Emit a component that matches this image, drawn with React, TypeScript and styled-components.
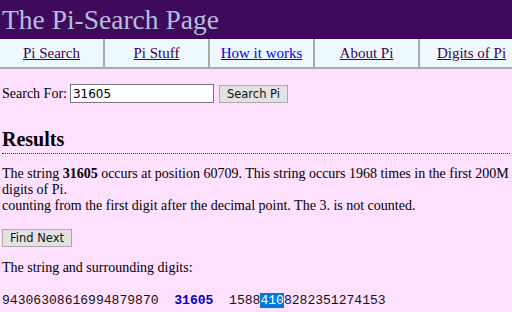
import React from "react";
import styled, { createGlobalStyle } from "styled-components";

const Global = createGlobalStyle`
  html, body { margin: 0; padding: 0; background: #ffe0ff; overflow: hidden; }
  body { font-family: "Liberation Serif", "Times New Roman", serif; font-size: 14px; color: #000; }
`;

const Header = styled.header`
  background: #400a5c;
  height: 39px;
  display: flex;
  align-items: center;
  padding: 0 2px;
`;

const Title = styled.h1`
  margin: 0;
  font-family: "Liberation Serif", serif;
  font-weight: normal;
  font-size: 27.5px;
  color: #b4bedc;
`;

const Nav = styled.nav`
  display: flex;
  width: 530px;
  background: #eef8ff;
  border-bottom: 2px solid #aaaaaa;
`;

const NavCell = styled.div`
  flex: 0 0 105px;
  height: 28px;
  box-sizing: border-box;
  border-right: 2px solid #aaaaaa;
  display: flex;
  align-items: center;
  justify-content: center;
  font-size: 15px;
`;

const NavLink = styled.a<{ $visited?: boolean }>`
  color: ${(p) => (p.$visited ? "#400050" : "#0000ee")};
  text-decoration: underline;
`;

const Content = styled.main`
  padding: 0 2px;
`;

const SearchRow = styled.form`
  display: flex;
  align-items: center;
  margin-top: 15px;
  gap: 4px;
`;

const Label = styled.label`
  font-size: 14px;
  margin-right: -1px;
`;

const Input = styled.input`
  width: 144px;
  height: 19px;
  box-sizing: border-box;
  border: 1px solid #777;
  background: #fff;
  font-family: "DejaVu Sans", sans-serif;
  font-size: 12px;
  padding: 0 2px;
  margin: 0 1px 0 0;
`;

const Button = styled.button`
  font-family: "DejaVu Sans", Verdana, sans-serif;
  font-size: 11.5px;
  height: 18px;
  padding: 0 7px;
  background: #e2e2e2;
  border: 1px solid #aaaaaa;
  color: #111;
  margin: 0;
`;

const H2 = styled.h2`
  margin: 25px 0 0;
  font-size: 20px;
  font-weight: bold;
  padding-bottom: 2px;
  border-bottom: 1px dotted #cc0000;
`;

const Para = styled.p`
  margin: 12px 0 0;
  font-size: 14px;
  line-height: 16px;
`;

const FindRow = styled.div`
  margin-top: 15px;
`;

const Note = styled.p`
  margin: 13px 0 0;
  font-size: 14px;
  line-height: 16px;
`;

const Digits = styled.pre`
  margin: 17px 0 0;
  font-family: "Liberation Mono", "Courier New", monospace;
  font-size: 13.05px;
  color: #111;
`;

const Match = styled.span`
  color: #0000bb;
  font-weight: bold;
`;

const Sel = styled.span`
  background: #0078d7;
  color: #fff;
`;

export default function App() {
  return (
    <>
      <Global />
      <Header>
        <Title>The Pi-Search Page</Title>
      </Header>
      <Nav>
        <NavCell><NavLink $visited href="#">Pi Search</NavLink></NavCell>
        <NavCell><NavLink $visited href="#">Pi Stuff</NavLink></NavCell>
        <NavCell><NavLink href="#">How it works</NavLink></NavCell>
        <NavCell><NavLink $visited href="#">About Pi</NavLink></NavCell>
        <NavCell><NavLink $visited href="#">Digits of Pi</NavLink></NavCell>
      </Nav>
      <Content>
        <SearchRow onSubmit={(e) => e.preventDefault()}>
          <Label>Search For:</Label>
          <Input defaultValue="31605" />
          <Button type="submit">Search Pi</Button>
        </SearchRow>
        <H2>Results</H2>
        <Para>
          The string <b>31605</b> occurs at position 60709. This string occurs 1968 times in the first 200M digits of Pi.
          <br />
          counting from the first digit after the decimal point. The 3. is not counted.
        </Para>
        <FindRow>
          <Button type="button">Find Next</Button>
        </FindRow>
        <Note>The string and surrounding digits:</Note>
        <Digits>
          {"94306308616994879870  "}
          <Match>31605</Match>
          {"  1588"}
          <Sel>410</Sel>
          {"8282351274153"}
        </Digits>
      </Content>
    </>
  );
}
